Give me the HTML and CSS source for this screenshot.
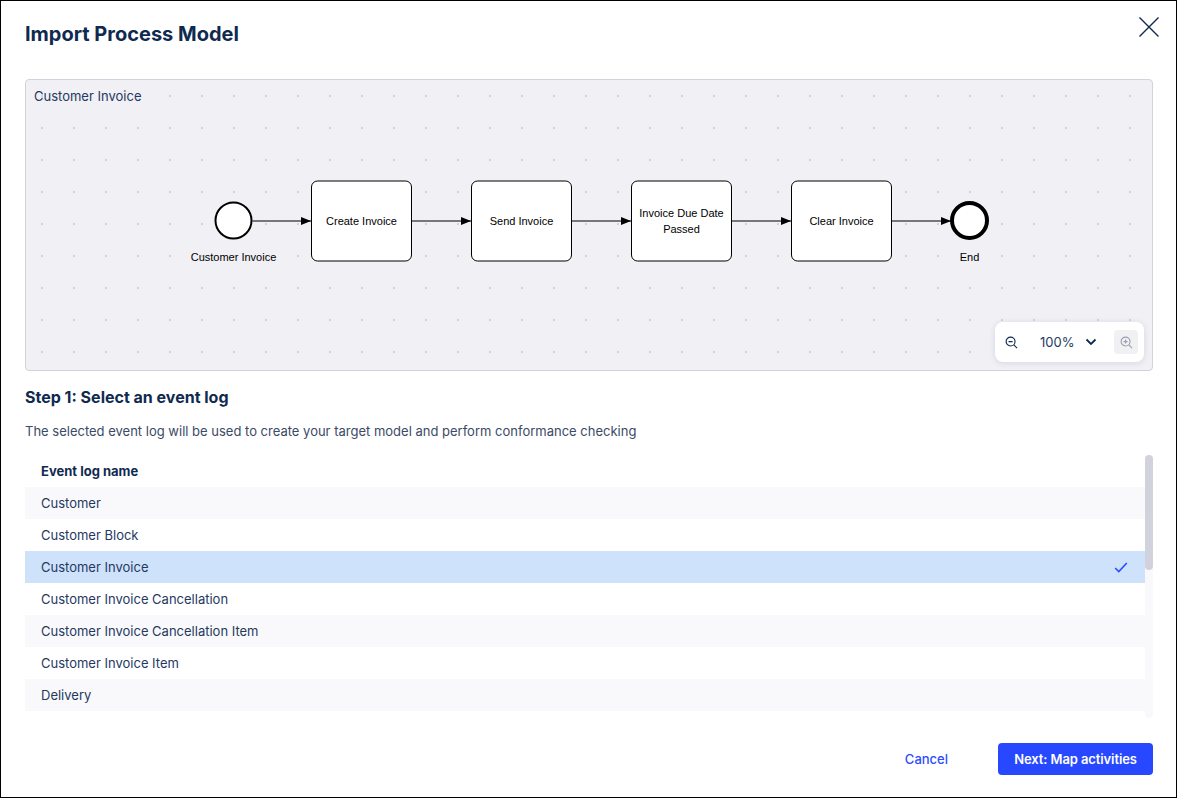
FILE: index.html
```html
<!DOCTYPE html>
<html lang="en">
<head>
<meta charset="utf-8">
<title>Import Process Model</title>
<link rel="stylesheet" href="styles.css">
</head>
<body>
<div class="modal">
  <header class="modal-head">
    <h1 class="title">Import Process Model</h1>
    <button class="close" aria-label="Close">
      <svg width="22" height="22" viewBox="0 0 22 22"><path d="M1.5 1.5 20.5 20.5M20.5 1.5 1.5 20.5" fill="none" stroke="#0f2a4f" stroke-width="1.4"/></svg>
    </button>
  </header>
  <section class="canvas">
    <div class="canvas-name">Customer Invoice</div>
    <svg class="diagram" width="1127" height="290" viewBox="26 81 1127 290">
      <defs>
        <marker id="arrow" markerUnits="userSpaceOnUse" markerWidth="10" markerHeight="8" refX="10" refY="4" orient="auto"><path d="M0 0 10 4 0 8z" fill="#000"/></marker>
      </defs>
      <g class="flow">
        <path d="M252.500 222H311" marker-end="url(#arrow)"/>
        <path d="M411.500 222H471" marker-end="url(#arrow)"/>
        <path d="M571.500 222H631" marker-end="url(#arrow)"/>
        <path d="M731.500 222H791" marker-end="url(#arrow)"/>
        <path d="M891.500 222H951" marker-end="url(#arrow)"/>
      </g>
      <circle class="start" cx="233.500" cy="221.500" r="18"/>
      <circle class="end" cx="969.500" cy="221.500" r="17.500"/>
      <rect class="task" x="311.500" y="182" width="100" height="80" rx="6"/>
      <rect class="task" x="471.500" y="182" width="100" height="80" rx="6"/>
      <rect class="task" x="631.500" y="182" width="100" height="80" rx="6"/>
      <rect class="task" x="791.500" y="182" width="100" height="80" rx="6"/>
      <g class="labels">
        <text x="233.500" y="262">Customer Invoice</text>
        <text x="361.500" y="226">Create Invoice</text>
        <text x="521.500" y="226">Send Invoice</text>
        <text x="681.500" y="218">Invoice Due Date</text>
        <text x="681.500" y="234">Passed</text>
        <text x="841.500" y="226">Clear Invoice</text>
        <text x="969.500" y="262">End</text>
      </g>
    </svg>
    <div class="zoombar">
      <svg class="zi" width="13" height="13" viewBox="0 0 14 14"><circle cx="6" cy="6" r="4.800"/><path d="M3.800 6H8.200M9.500 9.500 13 13"/></svg>
      <span class="zoomval">100%</span>
      <svg class="chev" width="12" height="8" viewBox="0 0 12 8"><path d="M1.500 1.500 6 6 10.500 1.500"/></svg>
      <span class="zoomin">
        <svg class="zi dim" width="13" height="13" viewBox="0 0 14 14"><circle cx="6" cy="6" r="4.800"/><path d="M3.800 6H8.200M6 3.800V8.200M9.500 9.500 13 13"/></svg>
      </span>
    </div>
  </section>
  <h2 class="step">Step 1: Select an event log</h2>
  <p class="desc">The selected event log will be used to create your target model and perform conformance checking</p>
  <div class="table-wrap">
    <div class="table">
      <div class="row head">Event log name</div>
      <div class="row alt">Customer</div>
      <div class="row">Customer Block</div>
      <div class="row selected">Customer Invoice
        <svg class="check" width="14" height="11" viewBox="0 0 14 11"><path d="M1.200 6 4.800 9.500 12.800 1"/></svg>
      </div>
      <div class="row">Customer Invoice Cancellation</div>
      <div class="row alt">Customer Invoice Cancellation Item</div>
      <div class="row">Customer Invoice Item</div>
      <div class="row alt">Delivery</div>
      <div class="row"></div>
    </div>
    <div class="track"><div class="thumb"></div></div>
  </div>
  <footer class="foot">
    <button class="cancel">Cancel</button>
    <button class="next">Next: Map activities</button>
  </footer>
</div>
</body>
</html>
```
FILE: styles.css
```css
* { box-sizing: border-box; }
html, body { margin: 0; height: 100%; }
body { background: #fff; font-family: Inter, "Liberation Sans", sans-serif; color: #0f2a4f; overflow: hidden; }
.modal { width: 1177px; height: 798px; border: 1px solid #000; padding: 0 23px 0 24px; display: flex; flex-direction: column; background: #fff; position: relative; }
.modal-head { height: 78px; flex: none; display: flex; justify-content: space-between; align-items: flex-start; }
.title { margin: 19px 0 0; font-size: 20px; line-height: 28px; font-weight: 700; color: #0f2a4f; }
.close { position: absolute; top: 15px; right: 16px; padding: 0; border: 0; background: none; width: 22px; height: 22px; display: block; }
.close svg { display: block; }
.canvas { position: relative; flex: none; height: 292px; border: 1px solid #d2d2dc; border-radius: 4px; background-color: #f0f0f5; background-image: radial-gradient(circle at 16px 16px, #d2d2da 0, #d2d2da 1px, transparent 1.2px); background-size: 32px 32px; overflow: hidden; }
.canvas-name { position: absolute; left: 8px; top: 8px; font-size: 13px; line-height: 16px; color: #25395f; }
.diagram { display: block; }
.flow path { fill: none; stroke: #000; stroke-width: 1; }
.start { fill: #fff; stroke: #000; stroke-width: 2; }
.end { fill: #fff; stroke: #000; stroke-width: 4; }
.task { fill: #fff; stroke: #000; stroke-width: 1; }
.labels text { font-family: "Liberation Sans", Arial, sans-serif; font-size: 11px; fill: #000; text-anchor: middle; }
.zoombar { position: absolute; right: 8px; bottom: 8px; width: 149px; height: 40px; background: #fff; border-radius: 8px; box-shadow: 0 1px 6px rgba(30, 40, 80, .12); display: flex; align-items: center; padding-left: 10px; }
.zi { fill: none; stroke: #0f2a4f; stroke-width: 1.200; display: block; }
.zi.dim { stroke: #9a9fad; }
.zoomval { font-size: 13px; margin-left: 22px; width: 34px; color: #25395f; }
.chev { margin-left: 11px; fill: none; stroke: #0f2a4f; stroke-width: 1.800; display: block; }
.zoomin { margin-left: 17px; width: 24px; height: 24px; background: #f1f1f3; border-radius: 4px; display: flex; align-items: center; justify-content: center; }
.step { margin: 16px 0 0; font-size: 16px; line-height: 20px; font-weight: 700; color: #0f2a4f; }
.desc { margin: 14px 0 0; font-size: 13px; line-height: 20px; color: #3b4a66; }
.table-wrap { margin-top: 14px; height: 263px; flex: none; display: flex; overflow: hidden; }
.table { flex: 1; min-width: 0; }
.row { height: 32px; padding: 0 16px; display: flex; align-items: center; justify-content: space-between; font-size: 13px; color: #25395f; background: #fff; }
.row.alt { background: #f9f9fb; }
.row.head { font-weight: 700; color: #0f2a4f; }
.row.selected { background: #cfe2fc; color: #25395f; }
.check { fill: none; stroke: #2b4cff; stroke-width: 1.600; display: block; margin-right: 1px; }
.track { width: 8px; flex: none; background: #f9f9fb; border-radius: 4px; }
.thumb { height: 115px; background: #d2d2dc; border-radius: 4px; }
.foot { flex: 1; display: flex; justify-content: flex-end; align-items: flex-start; padding-top: 25px; }
.cancel { border: 0; background: none; color: #2b4cff; font: 500 13px Inter, sans-serif; padding: 0; height: 32px; margin-right: 50px; }
.next { border: 0; background: #2748ff; color: #fff; font: 600 13px Inter, sans-serif; letter-spacing: -.1px; padding: 0; width: 155px; height: 32px; border-radius: 4px; }
```
